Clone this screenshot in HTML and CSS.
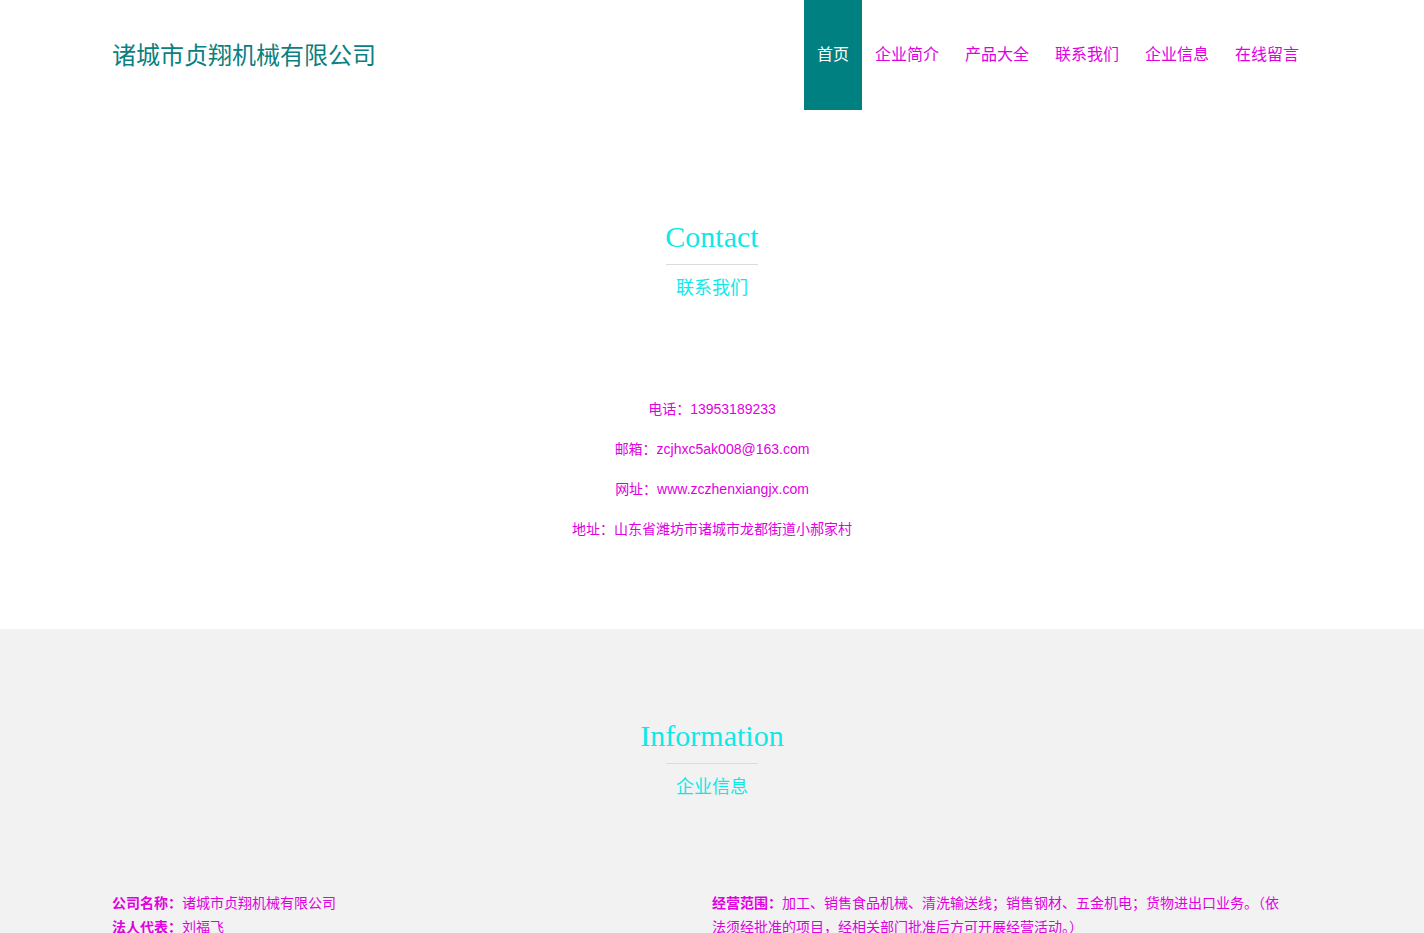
FILE: index.html
```html
<!DOCTYPE html>
<html lang="zh-CN">
<head>
<meta charset="utf-8">
<title>诸城市贞翔机械有限公司</title>
<link rel="stylesheet" href="styles.css">
</head>
<body>
<header class="header">
  <div class="container header-inner">
    <div class="logo">诸城市贞翔机械有限公司</div>
    <nav class="nav">
      <a class="nav-item active" href="#">首页</a>
      <a class="nav-item" href="#">企业简介</a>
      <a class="nav-item" href="#">产品大全</a>
      <a class="nav-item" href="#">联系我们</a>
      <a class="nav-item" href="#">企业信息</a>
      <a class="nav-item" href="#">在线留言</a>
    </nav>
  </div>
</header>

<section class="section contact">
  <div class="section-title">
    <h2 class="title-en">Contact</h2>
    <div class="title-line"></div>
    <div class="title-cn">联系我们</div>
  </div>
  <div class="contact-list">
    <p>电话：13953189233</p>
    <p>邮箱：zcjhxc5ak008@163.com</p>
    <p>网址：www.zczhenxiangjx.com</p>
    <p>地址：山东省潍坊市诸城市龙都街道小郝家村</p>
  </div>
</section>

<section class="section info">
  <div class="section-title">
    <h2 class="title-en">Information</h2>
    <div class="title-line"></div>
    <div class="title-cn">企业信息</div>
  </div>
  <div class="container info-grid">
    <div class="info-col">
      <p><b>公司名称：</b>诸城市贞翔机械有限公司</p>
      <p><b>法人代表：</b>刘福飞</p>
    </div>
    <div class="info-col info-col-right">
      <p><b>经营范围：</b>加工、销售食品机械、清洗输送线；销售钢材、五金机电；货物进出口业务。（依法须经批准的项目，经相关部门批准后方可开展经营活动。）</p>
    </div>
  </div>
</section>
</body>
</html>
```

FILE: styles.css
```css
* { box-sizing: border-box; }
html, body { margin: 0; padding: 0; }
body {
  font-family: "Liberation Sans", "Noto Sans CJK SC", sans-serif;
  background: #fff;
  color: #e000e0;
}
.container {
  width: 1200px;
  margin: 0 auto;
}
.header { height: 110px; background: #fff; }
.header-inner {
  display: flex;
  justify-content: space-between;
  align-items: stretch;
  height: 110px;
}
.logo {
  font-family: "Noto Sans CJK SC", sans-serif;
  font-size: 24px;
  color: #0a8080;
  display: flex;
  align-items: center;
  padding-bottom: 4px;
}
.nav { display: flex; align-items: stretch; }
.nav-item {
  display: flex;
  align-items: center;
  padding: 0 13px 5px;
  font-family: "Noto Sans CJK SC", sans-serif;
  font-size: 16px;
  color: #e000e0;
  text-decoration: none;
}
.nav-item.active { background: #008080; color: #fff; }

.section-title { text-align: center; }
.title-en {
  margin: 0;
  font-family: "Liberation Serif", serif;
  font-weight: normal;
  font-size: 30px;
  line-height: 36px;
  color: #10e8e8;
}
.title-line {
  width: 92px;
  height: 1px;
  background: #dcdcdc;
  margin: 9px auto 8px;
}
.title-cn {
  font-family: "Noto Sans CJK SC", sans-serif;
  font-size: 18px;
  line-height: 26px;
  color: #10e8e8;
}

.contact { padding: 109px 0 0; height: 519px; }
.contact-list {
  margin-top: 90px;
  text-align: center;
  font-size: 14px;
}
.contact-list p {
  margin: 0;
  line-height: 40px;
}

.info { background: #f2f2f2; padding: 89px 0 40px; }
.info-grid {
  margin-top: 93px;
  display: grid;
  grid-template-columns: 1fr 1fr;
  font-size: 14px;
}
.info-col p { margin: 0; line-height: 24px; }
.info-col b { font-weight: bold; }
.info-col-right { padding-right: 20px; }
```
